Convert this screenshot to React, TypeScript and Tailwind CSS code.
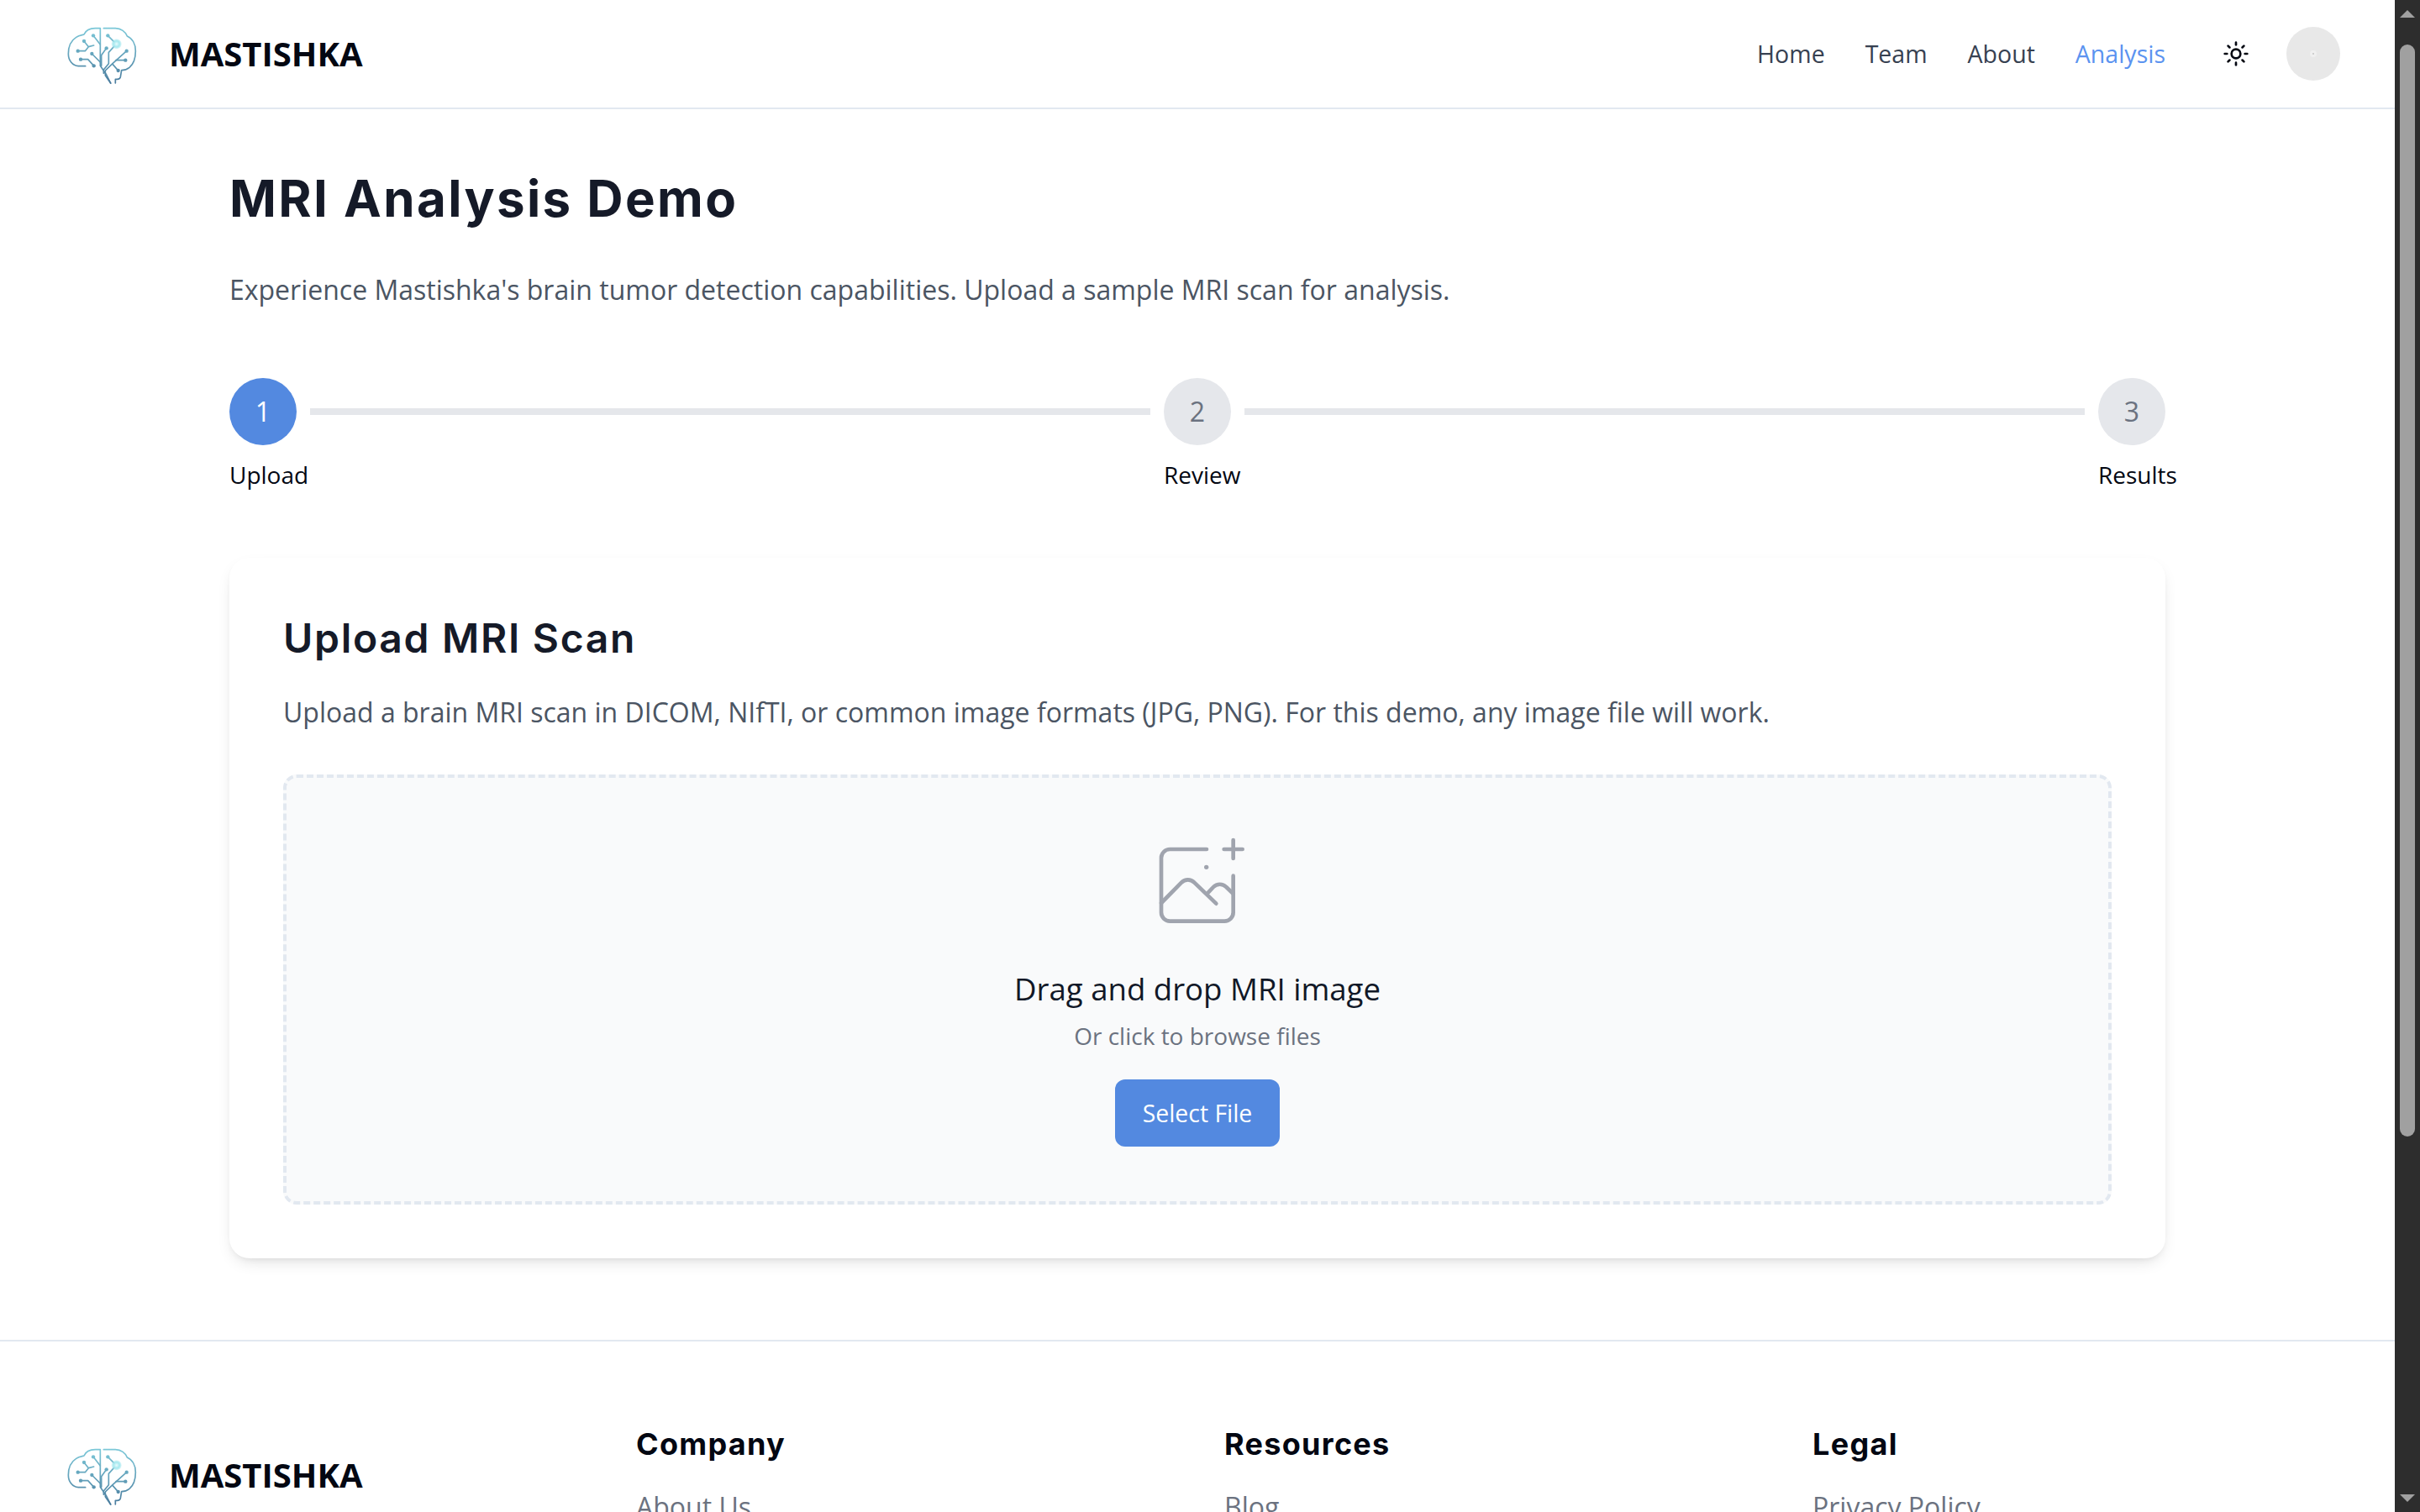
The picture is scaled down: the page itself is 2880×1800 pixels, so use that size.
import React from 'react';
import { Sun } from 'lucide-react';

const BrainLogo: React.FC<{ id: string }> = ({ id }) => (
  <svg viewBox="0 0 360 270" className="w-[120px] h-[90px] shrink-0">
    <defs>
      <linearGradient id={id} gradientUnits="userSpaceOnUse" x1="0" y1="40" x2="0" y2="240">
        <stop offset="0" stopColor="#7cc9d9" />
        <stop offset="1" stopColor="#4a7c9e" />
      </linearGradient>
      <radialGradient id={`${id}-glow`}>
        <stop offset="0" stopColor="#e6fbfd" />
        <stop offset="0.6" stopColor="#a5e8ef" />
        <stop offset="1" stopColor="#a5e8ef" stopOpacity="0.35" />
      </radialGradient>
    </defs>
    <g fill="none" stroke={`url(#${id})`} strokeWidth="5" strokeLinecap="round" strokeLinejoin="round">
      <path d="M125 179 H100 C78 178 64 158 64 135 C64 115 70 90 92 76 C100 70 112 68 120 66 C126 52 142 44 160 44 H178 V178 L200 210 L215 240" />
      <path d="M190 44 H232 C252 44 268 56 274 72 C292 80 304 100 304 125 C304 150 296 172 282 184 C272 192 262 194 254 194 L250 218 C248 224 244 226 238 226 H232 V240" />
      <path d="M153 70 L178 102" />
      <path d="M120 90 L136 110 L155 105 M98 125 H124 L136 110" />
      <path d="M108 155 H134 L155 178" />
      <path d="M148 135 L178 165" />
      <path d="M205 70 L235 100 L208 130 V170 L190 192 V205" />
      <path d="M200 115 L182 140 V178" />
      <path d="M272 125 L222 170 L196 195 V212 L215 240" />
      <path d="M268 158 H234" />
      <path d="M242 195 L222 172" />
    </g>
    <g fill={`url(#${id})`}>
      <circle cx="153" cy="70" r="6.5" />
      <circle cx="120" cy="90" r="6.5" />
      <circle cx="98" cy="125" r="6.5" />
      <circle cx="108" cy="155" r="6.5" />
      <circle cx="155" cy="178" r="6.5" />
      <circle cx="148" cy="135" r="6.5" />
      <circle cx="205" cy="70" r="6.5" />
      <circle cx="200" cy="115" r="6.5" />
      <circle cx="272" cy="125" r="6.5" />
      <circle cx="268" cy="158" r="6.5" />
      <circle cx="242" cy="195" r="6.5" />
    </g>
    <circle cx="236" cy="100" r="18" fill={`url(#${id}-glow)`} />
  </svg>
);

const UploadIcon = () => (
  <svg
    viewBox="231 111 288 288"
    fill="none"
    stroke="#a0a4ae"
    strokeWidth="14"
    strokeLinecap="round"
    strokeLinejoin="round"
    className="w-24 h-24 overflow-visible"
  >
    <path d="M408 153 H277 A31 31 0 0 0 246 184 V379 A31 31 0 0 0 277 410 H472 A31 31 0 0 0 503 379 V248" />
    <path d="M246 345 L318 272 A32 32 0 0 1 364 272 L442 347" />
    <path d="M414 307 L432 288 A32 32 0 0 1 478 288 L503 312" />
    <path d="M470 153 H536 M503 120 V186" />
    <circle cx="407" cy="217" r="8" fill="#a0a4ae" stroke="none" />
  </svg>
);

const Step: React.FC<{ n: number; label: string; active?: boolean }> = ({ n, label, active }) => (
  <div className="w-20 shrink-0">
    <div
      className={
        active
          ? 'w-20 h-20 rounded-full bg-[#5389e0] text-white text-[32px] flex items-center justify-center'
          : 'w-20 h-20 rounded-full bg-[#e5e7eb] text-[#6b7280] text-[32px] flex items-center justify-center'
      }
    >
      {n}
    </div>
    <div className="mt-[15px] text-[28px] leading-10 whitespace-nowrap text-[#030712]">{label}</div>
  </div>
);

const FooterCol: React.FC<{ title: string; links: string[] }> = ({ title, links }) => (
  <div>
    <h3 className="font-['Inter',sans-serif] text-[36px] leading-[56px] tracking-[1.3px] font-bold text-[#030712]">{title}</h3>
    <ul className="mt-[27px] flex flex-col gap-4 text-[32px] leading-10 text-[#6b7280]">
      {links.map((l) => (
        <li key={l}>{l}</li>
      ))}
    </ul>
  </div>
);

const Scrollbar = () => (
  <div className="w-[30px] shrink-0 bg-[#2d2d2d] flex flex-col items-center">
    <div className="mt-3 w-0 h-0 border-x-[9px] border-x-transparent border-b-[9px] border-b-[#a0a0a0]" />
    <div className="mt-8 w-[18px] h-[1300px] rounded-full bg-[#a0a0a0]" />
    <div className="mt-auto mb-3 w-0 h-0 border-x-[9px] border-x-transparent border-t-[9px] border-t-[#a0a0a0]" />
  </div>
);

export default function App() {
  return (
    <div className="h-screen flex overflow-hidden bg-white font-['Open_Sans',sans-serif]">
      <div className="flex-1 min-w-0 overflow-hidden">
        <header className="h-[130px] border-b-2 border-[#e2e8f0] pl-[60px] pr-[65px] flex items-center justify-between">
          <div className="flex items-center gap-[21px]">
            <BrainLogo id="brain-top" />
            <span className="text-[40px] font-bold text-[#030712]">MASTISHKA</span>
          </div>
          <div className="flex items-center">
            <nav className="flex items-center gap-12 text-[28.5px] text-[#374151]">
              <span>Home</span>
              <span>Team</span>
              <span>About</span>
              <span className="text-[#5b93f0]">Analysis</span>
            </nav>
            <Sun className="w-8 h-8 ml-[68px] text-[#030712]" strokeWidth={2} />
            <div className="ml-[44px] w-16 h-16 rounded-full bg-[#e8e8e8] flex items-center justify-center">
              <div className="w-2 h-2 rounded-full bg-[#f0f0f0] flex items-center justify-center">
                <div className="w-[2px] h-[2px] rounded-full bg-[#c4c4c4]" />
              </div>
            </div>
          </div>
        </header>

        <main className="w-[2304px] mx-auto pt-[70px] pb-[97px]">
          <h1 className="font-['Inter',sans-serif] text-[60px] leading-[72px] tracking-[2.4px] font-bold text-[#151a28]">MRI Analysis Demo</h1>
          <p className="mt-[49px] text-[32px] leading-[48px] text-[#4b5563]">
            Experience Mastishka's brain tumor detection capabilities. Upload a sample MRI scan for analysis.
          </p>

          <div className="mt-[81px] flex items-start">
            <Step n={1} label="Upload" active />
            <div className="flex-1 h-2 mx-4 mt-9 bg-[#e5e7eb]" />
            <Step n={2} label="Review" />
            <div className="flex-1 h-2 mx-4 mt-9 bg-[#e5e7eb]" />
            <Step n={3} label="Results" />
          </div>

          <section className="mt-[79px] rounded-3xl bg-white p-16 shadow-[0_8px_20px_-6px_rgba(0,0,0,0.14),0_4px_8px_-4px_rgba(0,0,0,0.08)]">
            <h2 className="font-['Inter',sans-serif] text-[48px] leading-[64px] tracking-[1.7px] font-semibold text-[#151a28]">Upload MRI Scan</h2>
            <p className="mt-8 text-[32px] leading-[48px] text-[#4b5563]">
              Upload a brain MRI scan in DICOM, NIfTI, or common image formats (JPG, PNG). For this demo, any image file will work.
            </p>
            <div className="mt-[50px] h-[512px] rounded-2xl border-4 border-dashed border-[#e2e8f0] bg-[#f9fafb] pt-[71px] flex flex-col items-center">
              <UploadIcon />
              <div className="mt-[56px] text-[36.6px] leading-[56px] font-medium text-[#111827]">Drag and drop MRI image</div>
              <div className="mt-2 text-[28px] leading-10 text-[#6b7280]">Or click to browse files</div>
              <button className="mt-8 w-[196px] h-20 rounded-xl bg-[#5389e0] text-white text-[28.4px] font-medium">Select File</button>
            </div>
          </section>
        </main>

        <footer className="border-t-2 border-[#e2e8f0] pl-[60px] pt-[94px]">
          <div className="grid grid-cols-[697px_700px_700px_1fr]">
            <div className="flex items-center gap-[21px] self-start pt-5">
              <BrainLogo id="brain-bottom" />
              <span className="text-[40px] font-bold text-[#030712]">MASTISHKA</span>
            </div>
            <FooterCol title="Company" links={['About Us', 'Our Team', 'Careers']} />
            <FooterCol title="Resources" links={['Blog', 'Documentation', 'Support']} />
            <FooterCol title="Legal" links={['Privacy Policy', 'Terms of Service']} />
          </div>
        </footer>
      </div>
      <Scrollbar />
    </div>
  );
}
